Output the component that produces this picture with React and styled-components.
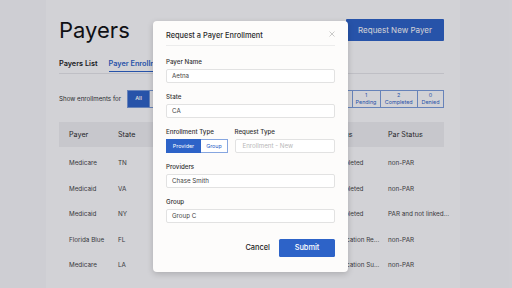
import React from 'react';
import styled, { createGlobalStyle } from 'styled-components';

const Global = createGlobalStyle`
  html, body { margin: 0; padding: 0; }
  body { font-family: Inter, "Liberation Sans", sans-serif; background: #fbfbfc; }
  * { box-sizing: border-box; }
`;

const BLUE = '#2d63c8';

const Page = styled.div`
  position: relative;
  width: 512px;
  height: 288px;
  overflow: hidden;
  display: flex;
  background: #fbfbfc;
`;

const Main = styled.main`
  margin-left: 46px;
  width: 414px;
  height: 100%;
  background: #fff;
  padding: 17px 16px 0 13px;
  display: flex;
  flex-direction: column;
`;

const HeaderRow = styled.div`
  display: flex;
  justify-content: space-between;
  align-items: center;
`;

const Title = styled.h1`
  margin: 0;
  font-size: 22px;
  font-weight: 400;
  line-height: 26px;
  color: #111;
`;

const PrimaryButton = styled.button`
  width: 98px;
  height: 21.5px;
  background: ${BLUE};
  color: #fff;
  border: none;
  border-radius: 1px;
  font-family: inherit;
  font-size: 8px;
  font-weight: 400;
  padding: 0;
`;

const TabBar = styled.div`
  display: flex;
  gap: 11px;
  margin-top: 16px;
  padding-bottom: 0.5px;
  border-bottom: 1px solid #e8e8ea;
`;

const Tab = styled.div`
  font-size: 7.3px;
  font-weight: 600;
  line-height: 10px;
  padding-bottom: 2px;
  color: ${p => (p.$active ? BLUE : '#222')};
  border-bottom: 1.5px solid ${p => (p.$active ? BLUE : 'transparent')};
`;

const FilterRow = styled.div`
  display: flex;
  align-items: center;
  gap: 6px;
  margin-top: 16px;
  height: 18px;
`;

const FilterLabel = styled.span`
  font-size: 6.2px;
  color: #333;
  white-space: nowrap;
`;

const SegGroup = styled.div`
  flex: 1;
  display: flex;
  height: 18px;
  border: 1px solid #7c9edc;
`;

const Seg = styled.div`
  flex: ${p => (p.$w ? `0 0 ${p.$w}px` : '1')};
  display: flex;
  flex-direction: column;
  align-items: center;
  justify-content: center;
  font-size: 5.4px;
  line-height: 7px;
  color: ${p => (p.$active ? '#fff' : BLUE)};
  background: ${p => (p.$active ? BLUE : '#fff')};
  border-left: ${p => (p.$first ? 'none' : '1px solid #7c9edc')};
  font-weight: ${p => (p.$active ? 600 : 400)};
`;

const Table = styled.div`
  margin-top: 14px;
  display: flex;
  flex-direction: column;
`;

const Grid = styled.div`
  display: grid;
  grid-template-columns: 49px 60px 1fr 57px 56px;
  align-items: center;
  padding-left: 10px;
  white-space: nowrap;
`;

const HeadRow = styled(Grid)`
  height: 25px;
  background: #f2f2f3;
  font-size: 7.2px;
  color: #2a2a2a;
`;

const Body = styled.div`
  padding-top: 4px;
`;

const Row = styled(Grid)`
  height: 25.5px;
  font-size: 6.3px;
  color: #454545;
`;

const Cell = styled.span`
  overflow: visible;
`;

const Overlay = styled.div`
  position: absolute;
  inset: 0;
  background: rgba(17, 17, 37, 0.19);
`;

const Modal = styled.div`
  position: absolute;
  left: 153px;
  top: 20.5px;
  width: 195px;
  background: #fdfcfb;
  border-radius: 4px;
  box-shadow: 0 2px 6px rgba(0, 0, 0, 0.18);
  padding: 0 13px 15.5px;
`;

const ModalHeader = styled.div`
  display: flex;
  justify-content: space-between;
  padding: 10px 0 4px;
  border-bottom: 1px solid #ececec;
`;

const ModalTitle = styled.h2`
  margin: 0;
  font-size: 7.4px;
  font-weight: 500;
  line-height: 10px;
  color: #2b2b2b;
`;

const CloseButton = styled.button`
  border: none;
  background: none;
  padding: 0;
  width: 6px;
  height: 6px;
  margin-right: 0.5px;
  display: flex;
  align-self: flex-start;
`;

const ModalBody = styled.div`
  padding-top: 11.5px;
  display: flex;
  flex-direction: column;
  gap: 9px;
`;

const Field = styled.div`
  display: flex;
  flex-direction: column;
  min-width: 0;
`;

const Label = styled.label`
  font-size: 6.2px;
  font-weight: 500;
  line-height: 9px;
  margin-bottom: 2.5px;
  color: #333;
`;

const Input = styled.div`
  height: 14.5px;
  border: 1px solid #e2e2e2;
  border-radius: 2px;
  background: #fff;
  padding: 0 ${p => (p.$placeholder ? 7 : 5)}px;
  display: flex;
  align-items: center;
  font-size: 6.2px;
  color: ${p => (p.$placeholder ? '#b8b8b8' : '#444')};
`;

const Pair = styled.div`
  display: grid;
  grid-template-columns: 62px 1fr;
  gap: 6.5px;
`;

const Toggle = styled.div`
  display: flex;
  height: 14.5px;
`;

const ToggleOption = styled.div`
  flex: 0 0 ${p => p.$w}px;
  display: flex;
  align-items: center;
  justify-content: center;
  font-size: 5.4px;
  background: ${p => (p.$active ? BLUE : '#fff')};
  color: ${p => (p.$active ? '#fff' : BLUE)};
  border: 1px solid ${p => (p.$active ? BLUE : '#86a6e0')};
  border-left: ${p => (p.$active ? `1px solid ${BLUE}` : 'none')};
`;

const Footer = styled.div`
  display: flex;
  justify-content: flex-end;
  margin-top: 15.5px;
`;

const TextButton = styled.button`
  height: 18px;
  padding: 0 9px;
  border: none;
  background: none;
  font-family: inherit;
  font-size: 7.4px;
  font-weight: 500;
  color: #222;
`;

const SubmitButton = styled.button`
  width: 56px;
  height: 18px;
  border: none;
  border-radius: 1.5px;
  background: ${BLUE};
  color: #fff;
  font-family: inherit;
  font-size: 7.4px;
  font-weight: 500;
  padding: 0;
`;

const rows = [
  ['Medicare', 'TN', 'Completed', 'non-PAR'],
  ['Medicaid', 'VA', 'Completed', 'non-PAR'],
  ['Medicaid', 'NY', 'Completed', 'PAR and not linked...'],
  ['Florida Blue', 'FL', 'Application Re...', 'non-PAR'],
  ['Medicare', 'LA', 'Application Su...', 'non-PAR'],
];

export default function App() {
  return (
    <>
      <Global />
      <Page>
        <Main>
          <HeaderRow>
            <Title>Payers</Title>
            <PrimaryButton>Request New Payer</PrimaryButton>
          </HeaderRow>
          <TabBar>
            <Tab>Payers List</Tab>
            <Tab $active>Payer Enrollments</Tab>
          </TabBar>
          <FilterRow>
            <FilterLabel>Show enrollments for</FilterLabel>
            <SegGroup>
              <Seg $w={21} $active $first>All</Seg>
              <Seg />
              <Seg />
              <Seg $w={28}><span>1</span><span>Pending</span></Seg>
              <Seg $w={37.5}><span>2</span><span>Completed</span></Seg>
              <Seg $w={26}><span>0</span><span>Denied</span></Seg>
            </SegGroup>
          </FilterRow>
          <Table>
            <HeadRow>
              <Cell>Payer</Cell>
              <Cell>State</Cell>
              <Cell />
              <Cell>Status</Cell>
              <Cell>Par Status</Cell>
            </HeadRow>
            <Body>
              {rows.map((r, i) => (
                <Row key={i}>
                  <Cell>{r[0]}</Cell>
                  <Cell>{r[1]}</Cell>
                  <Cell />
                  <Cell>{r[2]}</Cell>
                  <Cell>{r[3]}</Cell>
                </Row>
              ))}
            </Body>
          </Table>
        </Main>
        <Overlay />
        <Modal>
          <ModalHeader>
            <ModalTitle>Request a Payer Enrollment</ModalTitle>
            <CloseButton aria-label="Close">
              <svg width="6" height="6" viewBox="0 0 6 6">
                <path d="M0.5 0.5L5.5 5.5M5.5 0.5L0.5 5.5" stroke="#bdbdbd" strokeWidth="0.8" />
              </svg>
            </CloseButton>
          </ModalHeader>
          <ModalBody>
            <Field>
              <Label>Payer Name</Label>
              <Input>Aetna</Input>
            </Field>
            <Field>
              <Label>State</Label>
              <Input>CA</Input>
            </Field>
            <Pair>
              <Field>
                <Label>Enrollment Type</Label>
                <Toggle>
                  <ToggleOption $w={35} $active>Provider</ToggleOption>
                  <ToggleOption $w={27}>Group</ToggleOption>
                </Toggle>
              </Field>
              <Field>
                <Label>Request Type</Label>
                <Input $placeholder>Enrollment - New</Input>
              </Field>
            </Pair>
            <Field>
              <Label>Providers</Label>
              <Input>Chase Smith</Input>
            </Field>
            <Field>
              <Label>Group</Label>
              <Input>Group C</Input>
            </Field>
          </ModalBody>
          <Footer>
            <TextButton>Cancel</TextButton>
            <SubmitButton>Submit</SubmitButton>
          </Footer>
        </Modal>
      </Page>
    </>
  );
}
